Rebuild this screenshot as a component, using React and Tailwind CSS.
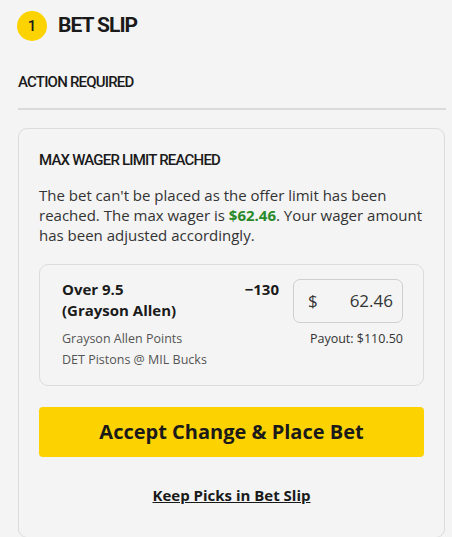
export default function App() {
  const cond = { fontFamily: 'Roboto, "Liberation Sans", sans-serif' };
  return (
    <div className="w-[452px] h-[537px] bg-[#f4f4f4] overflow-hidden text-[#1a1a1a]" style={{ fontFamily: '"Open Sans", sans-serif' }}>
      <div className="flex items-center gap-[11px] pl-[17px] pt-[10px]">
        <div className="w-[30px] h-[30px] rounded-full bg-[#fcd200] flex items-center justify-center text-[15px] font-medium" style={cond}>1</div>
        <h1 className="text-[21px] font-bold tracking-[-1px]" style={cond}>BET SLIP</h1>
      </div>
      <div className="ml-[18px] mr-[6px] mt-[29px] pb-[15px] border-b-2 border-[#dadada] text-[15px] font-medium tracking-[-0.8px]" style={cond}>ACTION REQUIRED</div>
      <div className="ml-[18px] mr-[7px] mt-[18px] border border-[#dcdcdc] rounded-[9px] px-[20px] pt-[20px] pb-[30px]">
        <h2 className="text-[15px] font-medium tracking-[-0.8px]" style={cond}>MAX WAGER LIMIT REACHED</h2>
        <p className="mt-[13px] text-[15px] leading-[20px] text-[#333]">
          The bet can't be placed as the offer limit has been reached. The max wager is{" "}
          <span className="font-bold text-[#2a8a2a]">$62.46</span>. Your wager amount has been adjusted accordingly.
        </p>
        <div className="mt-[19px] border border-[#dcdcdc] rounded-[9px] pl-[22px] pr-[20px] pt-[14px] pb-[15px] flex">
          <div className="flex-1">
            <div className="flex justify-between pr-[14px]">
              <div className="text-[15px] font-bold leading-[21px]">Over 9.5<br />(Grayson Allen)</div>
              <div className="text-[15px] font-bold leading-[21px]">&minus;130</div>
            </div>
            <div className="mt-[7px] text-[12.5px] text-[#555] leading-[21px]">Grayson Allen Points</div>
            <div className="text-[12.5px] text-[#555] leading-[21px]">DET Pistons @ MIL Bucks</div>
          </div>
          <div className="flex flex-col items-end">
            <div className="w-[110px] h-[44px] border border-[#cfcfcf] rounded-[7px] flex items-center justify-between px-[14px] pr-[9px] text-[17px] text-[#333]">
              <span>$</span>
              <span>62.46</span>
            </div>
            <div className="mt-[7px] text-[12.5px] text-[#333]">Payout: $110.50</div>
          </div>
        </div>
        <button className="mt-[21px] w-full h-[50px] rounded-[4px] bg-[#fcd200] text-[20px] font-bold text-[#1a1a1a]">Accept Change &amp; Place Bet</button>
        <div className="mt-[26px] text-center">
          <a className="text-[15px] font-bold underline text-[#1a1a1a]">Keep Picks in Bet Slip</a>
        </div>
      </div>
    </div>
  );
}
